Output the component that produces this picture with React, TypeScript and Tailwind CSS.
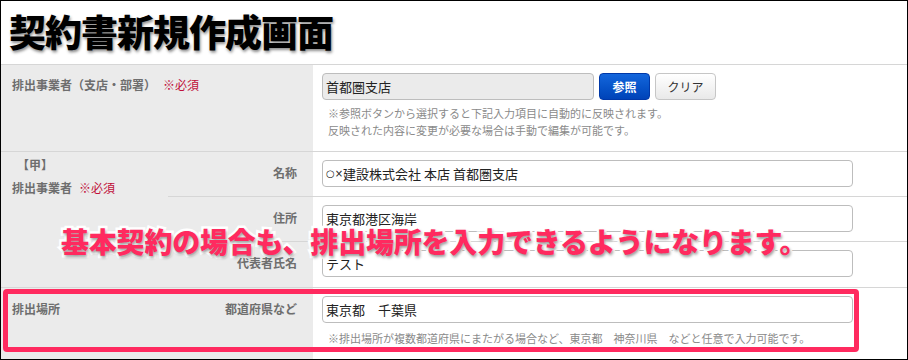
import React from 'react';

// 契約書新規作成画面 - form screenshot with annotation overlay

const jp = "font-['Noto_Sans_CJK_JP','Noto_Sans',sans-serif]";

function Required() {
  return <span className="ml-[7px] font-normal text-[#c0103a]">※必須</span>;
}

function TextInput({ value, gray = false, width = 'w-[531px]' }: { value: React.ReactNode; gray?: boolean; width?: string }) {
  return (
    <div
      className={`${width} h-[27px] flex items-center px-[3px] rounded-[4px] border border-[#bdbdbd] text-[13px] text-[#222] ${
        gray ? 'bg-[#ebebeb]' : 'bg-white'
      }`}
    >
      {value}
    </div>
  );
}

function SubRow({ label, value, last = false }: { label: string; value: React.ReactNode; last?: boolean }) {
  return (
    <div className={`flex h-[45px] ${last ? '' : 'border-b border-[#d6d6d6]'}`}>
      <div className="w-[145px] bg-[#ebebeb] pr-[16px] pt-[12px] text-right text-[12px] font-semibold text-[#6e6e6e]">
        {label}
      </div>
      <div className="flex-1 pl-[9px] pt-[8px]">
        <TextInput value={value} />
      </div>
    </div>
  );
}

export default function App() {
  return (
    <div className={`${jp} relative w-[908px] h-[360px] overflow-hidden border border-black bg-white`}>
      {/* Title */}
      <div className="h-[64px] border-b border-[#d6d6d6] pl-[8px] pt-[6px]">
        <h1 className="text-[37px] leading-[48px] font-black tracking-[-1px] text-black [paint-order:stroke_fill] [-webkit-text-stroke:5px_white] [text-shadow:1px_2px_3px_rgba(0,0,0,0.45)]">
          契約書新規作成画面
        </h1>
      </div>

      {/* 排出事業者（支店・部署） */}
      <div className="flex h-[87px] border-b border-[#d6d6d6]">
        <div className="w-[312px] bg-[#ebebeb] pl-[11px] pt-[11px] text-[12px] font-semibold text-[#6e6e6e]">
          排出事業者（支店・部署）
          <Required />
        </div>
        <div className="flex-1 pl-[9px] pt-[8px]">
          <div className="flex items-center gap-[5px]">
            <TextInput value="首都圏支店" gray width="w-[272px]" />
            <button className="h-[27px] w-[51px] rounded-[4px] border border-[#0038a8] bg-gradient-to-b from-[#1466dc] to-[#0043b8] text-[12px] font-bold text-white">
              参照
            </button>
            <button className="h-[27px] w-[61px] rounded-[4px] border border-[#c6c6c6] bg-gradient-to-b from-white to-[#e9e9e9] text-[12px] text-[#333]">
              クリア
            </button>
          </div>
          <div className="mt-[5px] pl-[6px] text-[11px] leading-[17px] text-[#8a8a8a]">
            <div>※参照ボタンから選択すると下記入力項目に自動的に反映されます。</div>
            <div>反映された内容に変更が必要な場合は手動で編集が可能です。</div>
          </div>
        </div>
      </div>

      {/* 【甲】 排出事業者 */}
      <div className="flex border-b border-[#d6d6d6]">
        <div className="w-[167px] bg-[#ebebeb] pl-[11px] pt-[3px] text-[12px] font-semibold text-[#6e6e6e]">
          <div className="pl-[5px] leading-[20px]">【甲】</div>
          <div className="mt-[3px] leading-[20px]">
            排出事業者
            <Required />
          </div>
        </div>
        <div className="flex-1">
          <SubRow
            label="名称"
            value={
              <>
                <span className="font-['DejaVu_Sans',sans-serif] text-[10px]">○×</span>建設株式会社 本店 首都圏支店
              </>
            }
          />
          <SubRow label="住所" value="東京都港区海岸" />
          <SubRow label="代表者氏名" value="テスト" last />
        </div>
      </div>

      {/* 排出場所 */}
      <div className="flex h-[80px]">
        <div className="w-[312px] bg-[#ebebeb] pl-[11px] pr-[16px] pt-[12px] flex justify-between text-[12px] font-semibold text-[#6e6e6e]">
          <span>排出場所</span>
          <span>都道府県など</span>
        </div>
        <div className="flex-1 pl-[9px] pt-[8px]">
          <TextInput value="東京都　千葉県" />
          <div className="mt-[7px] pl-[6px] text-[11px] text-[#8a8a8a]">
            ※排出場所が複数都道府県にまたがる場合など、東京都　神奈川県　などと任意で入力可能です。
          </div>
        </div>
      </div>

      {/* annotation overlays */}
      <div className="absolute left-[2px] top-[288px] w-[856px] h-[63px] rounded-[4px] border-[5px] border-[#ff2a5f]" />
      <div className="absolute left-[60px] top-[221px] text-[28px] leading-[38px] font-black tracking-[-0.2px] text-[#ff2a5f] [paint-order:stroke_fill] [-webkit-text-stroke:5px_white] [text-shadow:1px_2px_3px_rgba(0,0,0,0.4)]">
        基本契約の場合も、排出場所を入力できるようになります。
      </div>
    </div>
  );
}
